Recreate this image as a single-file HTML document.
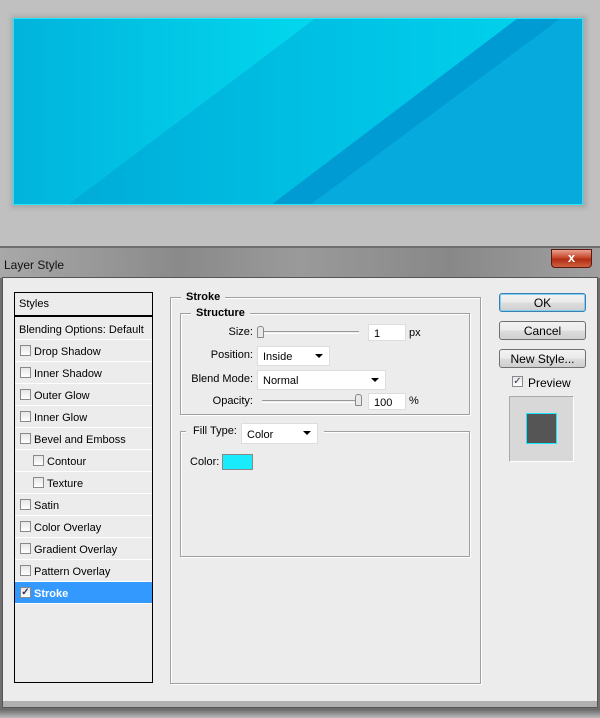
<!DOCTYPE html>
<html><head><style>
*{margin:0;padding:0;box-sizing:border-box}
body{width:600px;height:718px;background:#c0c0c0;position:relative;overflow:hidden;font-family:"Liberation Sans",Arial,sans-serif;font-size:11px;color:#000}
.a{position:absolute;white-space:nowrap}
.row{position:absolute;left:0;width:137px;height:22px;border-bottom:1px solid #fff;line-height:24px;white-space:nowrap}
.cb{position:absolute;width:11px;height:11px;border:1px solid #8a8a8a;background:linear-gradient(#e6e6e6,#fff);top:5px}
.grp{position:absolute;border:1px solid #a0a0a0;box-shadow:1px 1px 0 #fff inset,1px 1px 0 #fff}
.lg{position:absolute;background:#ececec;font-weight:bold;padding:0 5px;font-size:11px}
.btn{position:absolute;left:499px;width:87px;height:19px;border:1px solid #707070;border-radius:3px;background:linear-gradient(#f2f2f2 0%,#ebebeb 50%,#dddddd 51%,#cfcfcf 100%);text-align:center;font-size:12px;line-height:18px}
.inp{position:absolute;background:#fff;border:1px solid #ddd;height:17px;line-height:18px;padding-left:5px;font-size:11px;white-space:nowrap}
.arr{position:absolute;right:6px;top:7px;width:0;height:0;border-left:4px solid transparent;border-right:4px solid transparent;border-top:4px solid #000}
.lbl{position:absolute;text-align:right;font-size:11px;white-space:nowrap}
</style></head><body>
<div class="a" style="left:11px;top:16px;width:576px;height:192px;background:rgba(0,0,0,.12);filter:blur(2px)"></div>
<svg class="a" style="left:13px;top:18px" width="570" height="187">
<defs>
<linearGradient id="g1" x1="0" y1="0" x2="1" y2="0"><stop offset="0" stop-color="#01b3dc"/><stop offset="1" stop-color="#02d8ee"/></linearGradient>
<linearGradient id="g2" x1="0" y1="0" x2="1" y2="0"><stop offset="0" stop-color="#00acd8"/><stop offset="1" stop-color="#00d0ec"/></linearGradient>
</defs>
<rect width="570" height="187" fill="#05a8da"/>
<polygon points="0,0 303,0 55,187 0,187" fill="url(#g1)"/>
<polygon points="303,0 505,0 258,187 55,187" fill="url(#g2)"/>
<polygon points="505,0 548,0 297,187 258,187" fill="#009bd3"/>
<polygon points="548,0 570,0 570,187 297,187" fill="#06aadc"/>
<rect x=".5" y=".5" width="569" height="186" fill="none" stroke="#1ee8ff"/>
</svg>
<div class="a" style="left:0;top:246px;width:600px;height:463px;background:#6e6e6e"></div>
<div class="a" style="left:0;top:709px;width:600px;height:9px;background:linear-gradient(#666,#bbb)"></div>
<div class="a" style="left:0;top:248px;width:600px;height:30px;background:linear-gradient(90deg,#a8a8a8,#8a8a8a 30%,#9a9a9a 50%,#888 75%,#a0a0a0)"></div>
<div class="a" style="left:4px;top:258px;font-size:12px;color:#111">Layer Style</div>
<div class="a" style="left:551px;top:249px;width:41px;height:19px;border:1px solid #5a1a10;border-radius:0 0 4px 4px;background:linear-gradient(#e8a090,#c8482c 45%,#b02e14 55%,#d06040);color:#fff;text-align:center;font-weight:bold;font-size:13px;line-height:16px">x</div>
<div class="a" style="left:2px;top:277px;width:596px;height:431px;background:#b0b0b0;border:1px solid #555"></div>
<div class="a" style="left:3px;top:278px;width:594px;height:423px;background:#ececec"></div>
<div class="a" style="left:14px;top:292px;width:139px;height:391px;border:1px solid #000;background:#ececec">
 <div class="a" style="left:0;top:0;width:137px;height:24px;border-bottom:2px solid #000;line-height:23px;padding-left:4px">Styles</div>
 <div class="row" style="top:25px;padding-left:4px">Blending Options: Default</div>
 <div class="row" style="top:47px"><div class="cb" style="left:5px"></div><span style="position:absolute;left:19px">Drop Shadow</span></div>
 <div class="row" style="top:69px"><div class="cb" style="left:5px"></div><span style="position:absolute;left:19px">Inner Shadow</span></div>
 <div class="row" style="top:91px"><div class="cb" style="left:5px"></div><span style="position:absolute;left:19px">Outer Glow</span></div>
 <div class="row" style="top:113px"><div class="cb" style="left:5px"></div><span style="position:absolute;left:19px">Inner Glow</span></div>
 <div class="row" style="top:135px"><div class="cb" style="left:5px"></div><span style="position:absolute;left:19px">Bevel and Emboss</span></div>
 <div class="row" style="top:157px"><div class="cb" style="left:18px"></div><span style="position:absolute;left:32px">Contour</span></div>
 <div class="row" style="top:179px"><div class="cb" style="left:18px"></div><span style="position:absolute;left:32px">Texture</span></div>
 <div class="row" style="top:201px"><div class="cb" style="left:5px"></div><span style="position:absolute;left:19px">Satin</span></div>
 <div class="row" style="top:223px"><div class="cb" style="left:5px"></div><span style="position:absolute;left:19px">Color Overlay</span></div>
 <div class="row" style="top:245px"><div class="cb" style="left:5px"></div><span style="position:absolute;left:19px">Gradient Overlay</span></div>
 <div class="row" style="top:267px"><div class="cb" style="left:5px"></div><span style="position:absolute;left:19px">Pattern Overlay</span></div>
 <div class="row" style="top:289px;background:#3399ff;color:#fff;font-weight:bold"><div class="cb" style="left:5px;font-size:10px;line-height:9px;color:#335;text-align:center">&#10003;</div><span style="position:absolute;left:19px">Stroke</span></div>
</div>
<div class="grp" style="left:170px;top:297px;width:311px;height:387px"></div>
<div class="lg" style="left:181px;top:291px">Stroke</div>
<div class="grp" style="left:180px;top:313px;width:290px;height:102px"></div>
<div class="lg" style="left:191px;top:307px">Structure</div>
<div class="lbl" style="left:180px;width:73px;top:326px">Size:</div>
<div class="a" style="left:262px;top:331px;width:97px;height:3px;border-top:1px solid #999;border-bottom:1px solid #fff"></div>
<div class="a" style="left:257px;top:326px;width:7px;height:12px;border:1px solid #888;border-radius:3px 3px 1px 1px;background:#e8e8e8"></div>
<div class="inp" style="left:368px;top:324px;width:38px">1</div>
<div class="a" style="left:409px;top:327px">px</div>
<div class="lbl" style="left:180px;width:73px;top:349px">Position:</div>
<div class="inp" style="left:257px;top:346px;width:73px;height:20px;line-height:21px">Inside<div class="arr"></div></div>
<div class="lbl" style="left:180px;width:73px;top:373px">Blend Mode:</div>
<div class="inp" style="left:257px;top:370px;width:129px;height:20px;line-height:21px">Normal<div class="arr"></div></div>
<div class="lbl" style="left:180px;width:73px;top:395px">Opacity:</div>
<div class="a" style="left:262px;top:400px;width:97px;height:3px;border-top:1px solid #999;border-bottom:1px solid #fff"></div>
<div class="a" style="left:355px;top:394px;width:7px;height:12px;border:1px solid #888;border-radius:3px 3px 1px 1px;background:#e8e8e8"></div>
<div class="inp" style="left:368px;top:393px;width:38px">100</div>
<div class="a" style="left:409px;top:395px">%</div>
<div class="grp" style="left:180px;top:431px;width:290px;height:126px"></div>
<div class="a" style="top:424px;background:#ececec;padding:1px 4px 0 4px;height:14px;left:186px">&nbsp;Fill Type:</div>
<div class="a" style="left:240px;top:423px;width:84px;height:21px;background:#ececec"></div>
<div class="inp" style="left:241px;top:423px;width:77px;height:21px;line-height:22px">Color<div class="arr"></div></div>
<div class="a" style="left:190px;top:456px">Color:</div>
<div class="a" style="left:222px;top:454px;width:31px;height:16px;background:#19eafc;border:1px solid #888"></div>
<div class="btn" style="top:293px;border-color:#3c7fb1;box-shadow:0 0 0 1px #7fd0f0 inset">OK</div>
<div class="btn" style="top:321px">Cancel</div>
<div class="btn" style="top:349px">New Style...</div>
<div class="cb" style="left:512px;top:376px;font-size:10px;line-height:9px;color:#335;text-align:center">&#10003;</div>
<div class="a" style="left:528px;top:376px;font-size:12px">Preview</div>
<div class="a" style="left:509px;top:396px;width:65px;height:66px;background:#d8d8d8;border:1px solid #aaa;border-right-color:#fff;border-bottom-color:#fff"></div>
<div class="a" style="left:526px;top:413px;width:31px;height:31px;background:#555;border:1px solid #18e8ff"></div>
</body></html>
